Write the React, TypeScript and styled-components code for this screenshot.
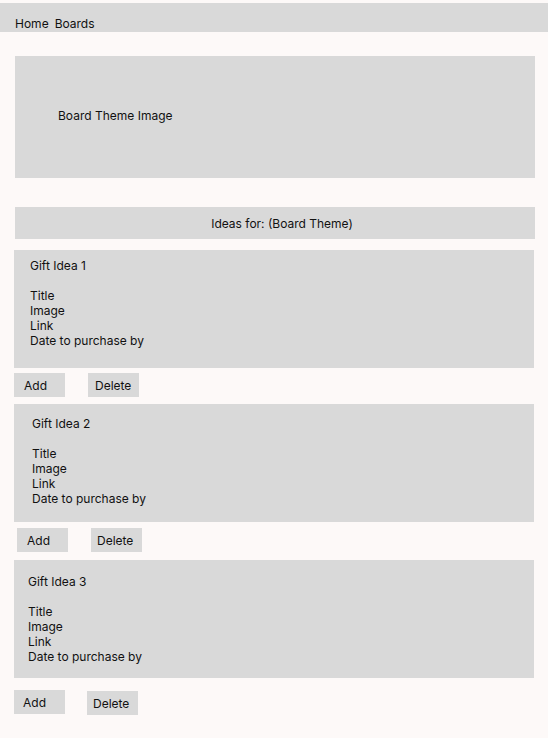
import React from "react";
import styled, { createGlobalStyle } from "styled-components";

const Global = createGlobalStyle`
  html, body {
    margin: 0;
    padding: 0;
    background: #fdf9f8;
  }
  body {
    font-family: Inter, "Noto Sans", Arial, sans-serif;
    font-size: 12px;
    line-height: 15px;
    color: #111;
  }
`;

const Page = styled.div`
  display: flex;
  flex-direction: column;
  width: 548px;
  min-height: 738px;
  padding-top: 3px;
  box-sizing: border-box;
`;

const NavBar = styled.nav`
  display: flex;
  gap: 6px;
  height: 29px;
  box-sizing: border-box;
  padding: 13px 0 0 15px;
  background: #d9d9d9;
`;

const NavLink = styled.span`
  cursor: pointer;
`;

const ThemeImage = styled.div`
  margin: 24px 13px 0 15px;
  height: 122px;
  box-sizing: border-box;
  padding: 52px 0 0 43px;
  background: #d9d9d9;
`;

const IdeasHeader = styled.div`
  margin: 29px 13px 0 15px;
  height: 32px;
  box-sizing: border-box;
  padding: 9px 0 0 14px;
  text-align: center;
  background: #d9d9d9;
`;

const Card = styled.div<{ $top: number; $padTop: number; $padLeft: number }>`
  margin: ${(p) => p.$top}px 14px 0 14px;
  height: 118px;
  box-sizing: border-box;
  padding: ${(p) => p.$padTop}px 0 0 ${(p) => p.$padLeft}px;
  background: #d9d9d9;
  white-space: pre-line;
`;

const ButtonRow = styled.div<{ $top: number; $left: number; $gap: number }>`
  display: flex;
  align-items: flex-start;
  gap: ${(p) => p.$gap}px;
  margin: ${(p) => p.$top}px 0 0 ${(p) => p.$left}px;
`;

const ActionButton = styled.button<{ $pad: number; $drop?: number }>`
  width: 51px;
  height: 24px;
  margin-top: ${(p) => p.$drop ?? 0}px;
  padding: 1px 0 0 ${(p) => p.$pad}px;
  box-sizing: border-box;
  border: none;
  border-radius: 0;
  background: #d9d9d9;
  font: inherit;
  line-height: 23px;
  color: inherit;
  text-align: left;
  cursor: pointer;
`;

type Idea = {
  n: number;
  top: number;
  padTop: number;
  padLeft: number;
  btnTop: number;
  btnLeft: number;
  gap: number;
  addPad: number;
  delPad: number;
  delDrop?: number;
};

const ideas: Idea[] = [
  { n: 1, top: 11, padTop: 8, padLeft: 16, btnTop: 5, btnLeft: 14, gap: 23, addPad: 10, delPad: 7 },
  { n: 2, top: 7, padTop: 12, padLeft: 18, btnTop: 6, btnLeft: 17, gap: 23, addPad: 10, delPad: 6 },
  { n: 3, top: 8, padTop: 14, padLeft: 14, btnTop: 12, btnLeft: 14, gap: 22, addPad: 9, delPad: 6, delDrop: 1 },
];

export default function App() {
  return (
    <>
      <Global />
      <Page>
        <NavBar>
          <NavLink>Home</NavLink>
          <NavLink>Boards</NavLink>
        </NavBar>
        <ThemeImage>Board Theme Image</ThemeImage>
        <IdeasHeader>Ideas for: (Board Theme)</IdeasHeader>
        {ideas.map((i) => (
          <React.Fragment key={i.n}>
            <Card $top={i.top} $padTop={i.padTop} $padLeft={i.padLeft}>
              {`Gift Idea ${i.n}\n\nTitle\nImage\nLink\nDate to purchase by`}
            </Card>
            <ButtonRow $top={i.btnTop} $left={i.btnLeft} $gap={i.gap}>
              <ActionButton $pad={i.addPad}>Add</ActionButton>
              <ActionButton $pad={i.delPad} $drop={i.delDrop}>
                Delete
              </ActionButton>
            </ButtonRow>
          </React.Fragment>
        ))}
      </Page>
    </>
  );
}
